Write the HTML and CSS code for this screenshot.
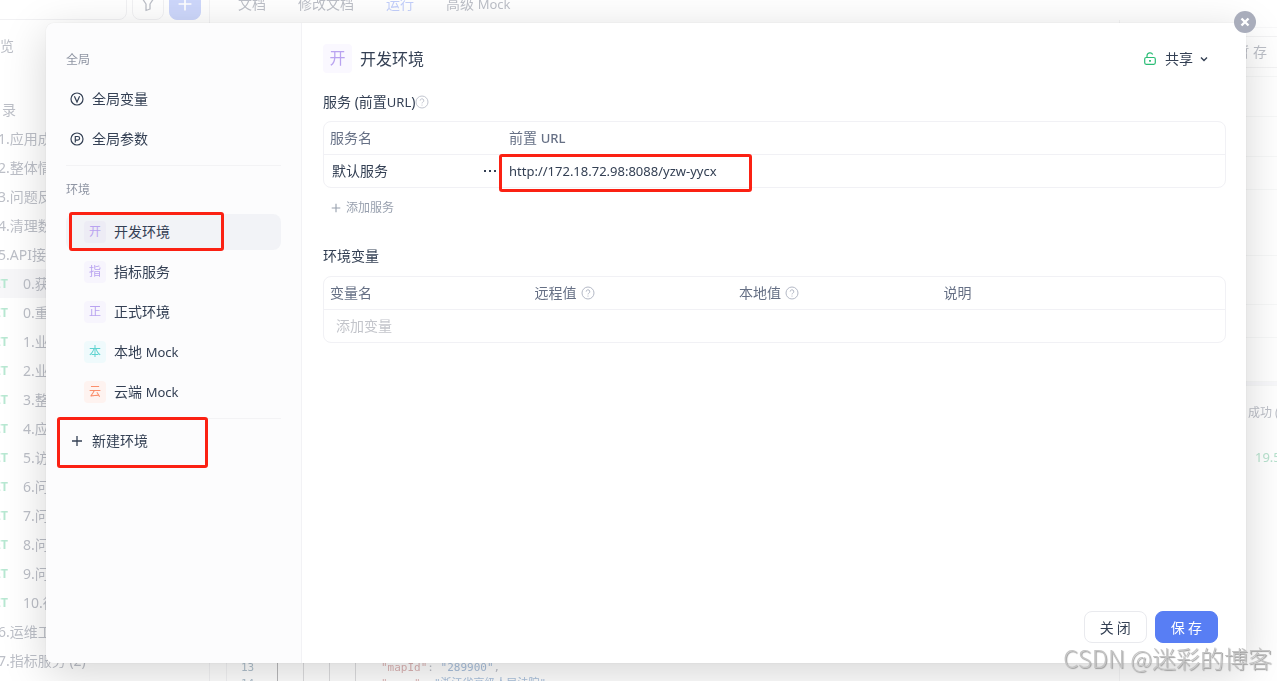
FILE: index.html
```html
<!DOCTYPE html>
<html lang="zh-CN">
<head>
<meta charset="utf-8">
<meta name="viewport" content="width=device-width, initial-scale=1">
<title>环境管理</title>
<link rel="stylesheet" href="styles.css">
</head>
<body>
<svg class="symbols" aria-hidden="true">
  <symbol id="help" viewBox="0 0 14 14"><circle cx="7" cy="7" r="6" fill="none" stroke="currentColor"/><path d="M5.2 5.600a1.800 1.800 0 1 1 2.600 1.600c-.6.3-.8.6-.8 1.200M7 9.600v1" fill="none" stroke="currentColor"/></symbol>
  <symbol id="plus" viewBox="0 0 14 14"><path d="M7 2v10M2 7h10" fill="none" stroke="currentColor" stroke-width="1.3"/></symbol>
</svg>

<div class="app" aria-hidden="true">
  <div class="app-side">
    <div class="app-tools">
      <div class="search"></div>
      <div class="tool"><svg width="16" height="16" viewBox="0 0 16 16"><path d="M2 2h12L10 8v5l-4 1.500V8z" fill="none" stroke="currentColor" stroke-width="1.300" stroke-linejoin="round"/></svg></div>
      <div class="tool tool-add"><svg width="18" height="18"><use href="#plus"/></svg></div>
    </div>
    <div class="tree-top">览</div>
    <div class="tree-root">录</div>
    <ul class="tree">
      <li>1.应用成</li>
      <li>2.整体情</li>
      <li>3.问题反</li>
      <li>4.清理数</li>
      <li>5.API接口</li>
      <li class="api current"><b>ET</b>0.获取</li>
      <li class="api"><b>ET</b>0.重置</li>
      <li class="api"><b>ET</b>1.业务</li>
      <li class="api"><b>ET</b>2.业务</li>
      <li class="api"><b>ET</b>3.整体</li>
      <li class="api"><b>ET</b>4.应用</li>
      <li class="api"><b>ET</b>5.访问</li>
      <li class="api"><b>ET</b>6.问题</li>
      <li class="api"><b>ET</b>7.问题</li>
      <li class="api"><b>ET</b>8.问题</li>
      <li class="api"><b>ET</b>9.问题</li>
      <li class="api"><b>ET</b>10.待</li>
      <li>6.运维工</li>
      <li>7.指标服务 (2)</li>
    </ul>
  </div>
  <div class="app-main">
    <div class="tabs"><span>文档</span><span>修改文档</span><span class="on">运行</span><span>高级 <span class="latin">Mock</span></span></div>
    <div class="app-body">
      <div class="code">
        <div class="line"><span class="no">13</span><i></i><i></i><i></i><i></i><span class="key">"mapId"</span>: <span class="str">"289900"</span>,</div>
        <div class="line"><span class="no">14</span><i></i><i></i><i></i><i></i><span class="key">"name"</span>: <span class="str">"浙江省高级人民法院"</span></div>
      </div>
      <div class="result">
        <div class="bar"></div>
        <div class="draft">暂 存</div>
        <div class="grid-rows"><p></p><p></p><p></p><p></p><p></p><p></p><p></p><p></p></div>
        <div class="status">成功 (</div>
        <div class="size">19.5</div>
      </div>
    </div>
  </div>
</div>

<div class="overlay">
  <div class="modal" role="dialog" aria-modal="true" aria-label="环境管理">
    <button class="dismiss" type="button" aria-label="关闭窗口"><svg width="12" height="12" viewBox="0 0 12 12"><path d="M2.500 2.500l7 7M9.500 2.500l-7 7" stroke="currentColor" stroke-width="2.400"/></svg></button>
    <nav class="side">
      <h2>全局</h2>
      <ul>
        <li><button class="item" type="button"><svg width="14" height="14" viewBox="0 0 14 14" fill="none" stroke="currentColor" stroke-width="1.200"><circle cx="7" cy="7" r="6"/><path d="M4.400 4.200L7 10l2.600-5.800"/></svg>全局变量</button></li>
        <li><button class="item" type="button"><svg width="14" height="14" viewBox="0 0 14 14" fill="none" stroke="currentColor" stroke-width="1.200"><circle cx="7" cy="7" r="6"/><path d="M5.300 10.400V4.500h2.500a1.800 1.800 0 0 1 0 3.600H5.300"/></svg>全局参数</button></li>
      </ul>
      <hr>
      <h2>环境</h2>
      <ul>
        <li><button class="item env selected" type="button"><span class="badge">开</span>开发环境<span class="mark mark-env"></span></button></li>
        <li><button class="item env" type="button"><span class="badge">指</span>指标服务</button></li>
        <li><button class="item env" type="button"><span class="badge">正</span>正式环境</button></li>
        <li><button class="item env" type="button"><span class="badge teal">本</span><span>本地 <span class="latin">Mock</span></span></button></li>
        <li><button class="item env" type="button"><span class="badge orange">云</span><span>云端 <span class="latin">Mock</span></span></button></li>
      </ul>
      <hr>
      <button class="item create" type="button"><svg width="14" height="14"><use href="#plus"/></svg>新建环境<span class="mark mark-new"></span></button>
    </nav>
    <section class="content">
      <header>
        <span class="badge large">开</span>
        <h1>开发环境</h1>
        <button class="share" type="button" aria-haspopup="menu"><svg class="lock" width="14" height="14" viewBox="0 0 14 14" fill="none" stroke="currentColor" stroke-width="1.200"><rect x="1.700" y="5.500" width="10.600" height="6.800" rx="1.500"/><path d="M4 5.500V3.700a3 3 0 0 1 5.700-1.200"/><path d="M7 8.100v1.600" stroke-width="1.800"/></svg>共享<svg class="chevron" width="10" height="10" viewBox="0 0 10 10" fill="none" stroke="currentColor" stroke-width="1.400"><path d="M2 3.500l3 3 3-3"/></svg></button>
      </header>
      <h3>服务 (前置<span class="latin">URL</span>)<svg class="help" width="14" height="14"><use href="#help"/></svg></h3>
      <div class="card">
        <table class="services">
          <thead><tr><th>服务名</th><th>前置 <span class="latin strong">URL</span></th></tr></thead>
          <tbody><tr>
            <td><div class="name"><span>默认服务</span><button class="more" type="button" aria-label="更多"><svg width="12" height="4" viewBox="0 0 12 4" fill="currentColor"><rect x="0" y="1" width="2" height="2"/><rect x="5" y="1" width="2" height="2"/><rect x="10" y="1" width="2" height="2"/></svg></button></div></td>
            <td class="url"><input type="text" aria-label="前置 URL" value="http://172.18.72.98:8088/yzw-yycx"><span class="mark mark-url"></span></td>
          </tr></tbody>
        </table>
      </div>
      <button class="add" type="button"><svg width="12" height="12"><use href="#plus"/></svg>添加服务</button>
      <h3>环境变量</h3>
      <div class="card vars-card">
        <table class="vars">
          <thead><tr><th>变量名</th><th>远程值<svg class="help gap" width="14" height="14"><use href="#help"/></svg></th><th>本地值<svg class="help gap" width="14" height="14"><use href="#help"/></svg></th><th>说明</th></tr></thead>
          <tbody><tr><td colspan="4"><input class="new-var" type="text" aria-label="添加变量" placeholder="添加变量"></td></tr></tbody>
        </table>
      </div>
      <footer>
        <button class="btn" type="button">关 闭</button>
        <button class="btn primary" type="button">保 存</button>
      </footer>
    </section>
  </div>
</div>
<div class="watermark">CSDN @迷彩的博客</div>
</body>
</html>
```
FILE: styles.css
```css
* { box-sizing: border-box; }
body, h1, h2, h3, ul, p { margin: 0; padding: 0; font-weight: 400; }
ul { list-style: none; }
body {
  height: 100vh;
  overflow: hidden;
  background: #fff;
  color: #344054;
  font: 14px/20px "Noto Sans", "Noto Sans CJK SC", sans-serif;
}
button, input { font: inherit; color: inherit; background: none; border: 0; padding: 0; margin: 0; }
svg { flex: none; display: block; }
.symbols { position: absolute; width: 0; height: 0; }
.latin { font-size: 13px; }
.strong { font-weight: 500; }

/* Application behind the dialog */
.app {
  position: fixed;
  inset: -12px 0 -11px -8px;
  display: flex;
  color: #bcbfc7;
}
.app-side { width: 218px; flex: none; border-right: 1px solid #f3f3f5; }
.app-tools { display: flex; gap: 5px; height: 32px; padding-right: 8px; }
.search { flex: 1; border: 1px solid #f1f1f3; border-radius: 8px; }
.tool { width: 32px; display: grid; place-items: center; border: 1px solid #f1f1f3; border-radius: 8px; }
.tool-add { background: #cdd7fb; border-color: #cdd7fb; color: #fff; }
.tree-top { margin: 16px 0 0 8px; }
.tree-root { margin: 44px 0 4px 10px; }
.tree li { height: 29px; line-height: 29px; padding-left: 6px; white-space: nowrap; }
.tree .api { display: flex; padding-left: 0; }
.tree .current { background: #f7f7f9; }
.api b { width: 31px; padding-right: 15px; text-align: right; font-size: 12px; color: #b8e8d2; }
.app-main { flex: 1; display: flex; flex-direction: column; }
.tabs { display: flex; gap: 32px; padding-left: 28px; line-height: 32px; }
.tabs .on { color: #c3cffb; }
.app-body { flex: 1; display: flex; }
.code {
  flex: 1;
  align-self: flex-end;
  margin-left: 16px;
  border-left: 1px solid #f3f3f5;
  font: 11px/16px "DejaVu Sans Mono", "Noto Sans CJK SC", monospace;
}
.line { display: flex; white-space: pre; }
.no { width: 50px; padding-left: 14px; color: #b0c0cc; }
.line i { width: 26px; border-left: 1px solid #dddddf; }
.line .no + i { border-color: #b9b9bb; }
.key { color: #dcb4b4; }
.str { color: #a9c0dc; }
.result { width: 158px; border-left: 1px solid #f5f5f6; }
.bar { height: 8px; border-bottom: 1px solid #f8f8f9; }
.draft { margin: 8px 0; height: 32px; line-height: 30px; padding-right: 10px; text-align: right; border: 1px solid #f3f3f4; border-right: 0; }
.grid-rows { border-top: 1px solid #f7f8f8; }
.grid-rows p { height: 40px; border-bottom: 1px solid #f7f8f8; }
.grid-rows p:nth-child(3) { height: 33px; }
.grid-rows p:nth-child(4) { height: 66px; }
.grid-rows p:nth-child(5) { height: 49px; }
.grid-rows p:nth-child(6) { height: 33px; }
.grid-rows p:nth-child(7) { height: 44px; }
.grid-rows p:nth-child(8) { height: 4px; background: #f8f8fb; }
.status { margin: 17px 0 0 128px; font-size: 12px; white-space: nowrap; }
.size { margin: 24px 0 0 135px; font-size: 13px; color: #b8e2ce; }

/* Dialog */
.overlay { position: fixed; inset: 0; display: flex; padding: 23px 31px 18px 46px; }
.modal {
  position: relative;
  flex: 1;
  display: flex;
  border-radius: 8px;
  background: #fff;
  box-shadow: 0 0 1px rgba(0, 0, 0, .2), 0 10px 44px rgba(0, 0, 0, .17);
}
.dismiss {
  position: absolute;
  top: -12px;
  right: -10px;
  width: 22px;
  height: 22px;
  display: grid;
  place-items: center;
  border-radius: 50%;
  background: #a9adbb;
  color: #fff;
}
.side {
  width: 256px;
  flex: none;
  padding: 27px 20px 0;
  border-right: 1px solid #f2f2f5;
  border-radius: 8px 0 0 8px;
  background: #fcfcfd;
}
.side h2 { font-size: 12px; color: #8f95a3; }
.side ul { display: grid; gap: 4px; margin-top: 11px; }
.side hr + h2 { margin-top: 14px; }
.side hr + h2 + ul { margin-top: 14px; }
.side hr { margin: 8px 0 0; border: 0; border-top: 1px solid #f3f3f5; }
.item {
  position: relative;
  width: 100%;
  height: 36px;
  display: flex;
  align-items: center;
  gap: 8px;
  padding-left: 4px;
  border-radius: 8px;
  text-align: left;
}
.env { padding-left: 18px; }
.selected { background: #f2f3f7; }
.create { margin-top: 4px; }
.badge {
  flex: none;
  width: 22px;
  height: 22px;
  border-radius: 4px;
  background: #f7f5fd;
  color: #b9a3f0;
  font-size: 12px;
  line-height: 22px;
  text-align: center;
}
.selected .badge { background: #edecf5; }
.teal { background: #effafc; color: #5fd3d0; }
.orange { background: #fef3f0; color: #fb8f6c; }
.large { width: 29px; height: 29px; font-size: 16px; line-height: 29px; background: #faf8ff; }
.mark { position: absolute; border: 3px solid #fb2113; border-radius: 3px; pointer-events: none; }
.mark-env { top: -2px; left: 3px; width: 155px; height: 39px; }
.mark-new { top: -6px; left: -9px; width: 151px; height: 51px; }
.mark-url { top: -1px; left: -4px; width: 253px; height: 38px; }

.content { flex: 1; display: flex; flex-direction: column; padding: 21px 20px 20px 21px; }
header { display: flex; align-items: center; gap: 8px; margin-bottom: 19px; }
h1 { font-size: 16px; }
.share { display: flex; align-items: center; margin-left: auto; padding-right: 17px; }
.lock { color: #2bbd76; margin-right: 8px; }
.chevron { margin-left: 6px; }
h3 { display: flex; align-items: center; font-size: 14px; white-space: pre; }
.help { color: #c2c6d0; }
.gap { display: inline-block; margin-left: 4px; vertical-align: -2px; color: #b4b9c6; }
.card { margin-top: 9px; border: 1px solid #f1f1f5; border-radius: 8px; }
.vars-card { margin-top: 10px; }
table { width: 100%; table-layout: fixed; border-spacing: 0; }
th, td { height: 33px; padding: 0 7px; text-align: left; }
th { font-weight: 400; color: #667085; border-bottom: 1px solid #f1f1f5; padding-left: 6px; }
td { height: 32px; }
.services th:first-child { width: 179px; }
.name { display: flex; justify-content: space-between; align-items: center; padding-left: 1px; }
.url { position: relative; padding-left: 6px; }
.url input { display: block; width: 100%; font-size: 13px; }
.vars th { width: 22.7%; }
.vars th:last-child { width: auto; }
.new-var { display: block; width: 100%; padding-left: 5px; }
.new-var::placeholder { color: #c3c5cb; opacity: 1; }
.add { display: flex; align-items: center; gap: 4px; margin: 10px 0 28px 7px; font-size: 12px; color: #98a0ae; }
footer { display: flex; justify-content: flex-end; gap: 8px; margin-top: auto; padding-right: 8px; }
.btn { height: 32px; padding: 0 15px; border: 1px solid #e9eaee; border-radius: 8px; font-family: "Noto Sans CJK SC", sans-serif; }
.primary { background: #587ef4; border-color: #587ef4; color: #fff; }

.watermark {
  position: fixed;
  right: 5px;
  bottom: 7px;
  font: 300 24px/32px "Noto Sans CJK SC", sans-serif;
  color: #c4c4c4;
  text-shadow: 1px 1px 1px #9c9c9c;
}
```
